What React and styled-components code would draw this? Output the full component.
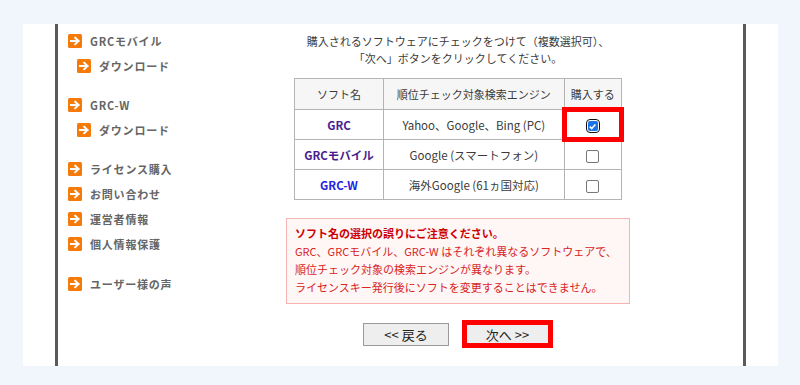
import React from 'react';
import styled, { createGlobalStyle } from 'styled-components';

const GlobalStyle = createGlobalStyle`
  html, body {
    margin: 0;
    padding: 0;
    background: #f1f6fd;
  }
  body {
    font-family: "Noto Sans CJK JP", "Noto Sans", sans-serif;
  }
`;

const Panel = styled.div`
  margin: 24px 22px 0 23px;
  height: 342px;
  background: #ffffff;
  padding-left: 32px;
  box-sizing: border-box;
`;

const Frame = styled.div`
  width: 691px;
  height: 100%;
  box-sizing: border-box;
  border-left: 3px solid #5a5a5a;
  border-right: 3px solid #5a5a5a;
  display: flex;
`;

const Nav = styled.nav`
  width: 228px;
  padding: 4px 0 0 10px;
  box-sizing: border-box;
  display: flex;
  flex-direction: column;
`;

const NavGroup = styled.div`
  margin-bottom: ${(p) => p.gap || 14}px;
`;

const NavItem = styled.div`
  height: 25px;
  display: flex;
  align-items: center;
  gap: 8px;
  padding-left: ${(p) => (p.sub ? 9 : 0)}px;
  font-size: 11px;
  font-weight: 700;
  letter-spacing: 0.8px;
  color: #656565;
`;

const Main = styled.main`
  width: 344px;
  padding-top: 9px;
  display: flex;
  flex-direction: column;
  align-items: center;
`;

const Intro = styled.p`
  margin: 0;
  font-size: 11px;
  line-height: 17px;
  color: #3a3a3a;
  text-align: center;
`;

const Table = styled.table`
  margin-top: 11px;
  width: 328px;
  border-collapse: collapse;
  font-size: 11px;
  color: #3a3a3a;
`;

const Th = styled.th`
  height: 30px;
  padding: 0;
  border: 1px solid #b4b4b4;
  background: #f6f6f6;
  font-weight: 400;
  width: ${(p) => p.w}px;
`;

const Td = styled.td`
  position: relative;
  height: 29px;
  padding: 0;
  border: 1px solid #b4b4b4;
  text-align: center;
  font-size: 11.5px;
`;

const SoftName = styled.span`
  font-weight: 700;
  color: ${(p) => p.color};
`;

const Box = styled.span`
  display: inline-block;
  vertical-align: middle;
  width: 11px;
  height: 11px;
  border-radius: 2px;
  border: 1px solid #777;
  background: #fff;
`;

const CheckedBox = styled.span`
  display: inline-flex;
  align-items: center;
  justify-content: center;
  vertical-align: middle;
  width: 10px;
  height: 10px;
  border-radius: 2px;
  background: #1a73e8;
  outline: 1.5px solid #111;
  outline-offset: 1px;
`;

const Highlight = styled.span`
  position: absolute;
  left: -3px;
  top: -3px;
  right: -3px;
  bottom: -3px;
  border: 5px solid #ff0000;
  pointer-events: none;
`;

const Warning = styled.div`
  margin-top: 18px;
  width: 344px;
  box-sizing: border-box;
  padding: 5px 8px 7px;
  border: 1px solid #f4b4b4;
  background: #fff6f6;
  color: #d82424;
  font-size: 11px;
  line-height: 18px;
`;

const WarnTitle = styled.div`
  font-weight: 700;
  color: #cc0000;
`;

const Buttons = styled.div`
  margin-top: 16px;
  display: flex;
  align-items: center;
  gap: 13px;
`;

const Button = styled.button`
  width: ${(p) => (p.marked ? 91 : 86)}px;
  height: ${(p) => (p.marked ? 28 : 23)}px;
  box-sizing: border-box;
  border: ${(p) => (p.marked ? '5px solid #ff0000' : '1px solid #9a9a9a')};
  background: #eeeeee;
  font-family: "Noto Sans CJK JP", sans-serif;
  font-size: 13px;
  color: #222;
  padding: 0;
`;

const Arrow = () => (
  <svg width="14" height="14" viewBox="0 0 14 14">
    <rect width="14" height="14" rx="1.5" fill="#f47a0a" />
    <path d="M3 7H10.5M7.2 3.8L10.5 7L7.2 10.2" stroke="#fff" strokeWidth="2" fill="none" strokeLinecap="square" />
  </svg>
);

const Check = () => (
  <svg width="9" height="9" viewBox="0 0 10 10">
    <path d="M2 5.2L4.1 7.3L8.2 2.8" stroke="#fff" strokeWidth="1.8" fill="none" />
  </svg>
);

const rows = [
  { name: 'GRC', color: '#4a1d8e', engine: 'Yahoo、Google、Bing (PC)', checked: true },
  { name: 'GRCモバイル', color: '#4a1d8e', engine: 'Google (スマートフォン)' },
  { name: 'GRC-W', color: '#2424e0', engine: '海外Google (61ヵ国対応)' },
];

export default function App() {
  return (
    <>
      <GlobalStyle />
      <Panel>
        <Frame>
          <Nav>
            <NavGroup>
              <NavItem><Arrow />GRCモバイル</NavItem>
              <NavItem sub><Arrow />ダウンロード</NavItem>
            </NavGroup>
            <NavGroup>
              <NavItem><Arrow />GRC-W</NavItem>
              <NavItem sub><Arrow />ダウンロード</NavItem>
            </NavGroup>
            <NavGroup gap={15}>
              <NavItem><Arrow />ライセンス購入</NavItem>
              <NavItem><Arrow />お問い合わせ</NavItem>
              <NavItem><Arrow />運営者情報</NavItem>
              <NavItem><Arrow />個人情報保護</NavItem>
            </NavGroup>
            <NavGroup>
              <NavItem><Arrow />ユーザー様の声</NavItem>
            </NavGroup>
          </Nav>
          <Main>
            <Intro>
              購入されるソフトウェアにチェックをつけて（複数選択可）、
              <br />
              「次へ」ボタンをクリックしてください。
            </Intro>
            <Table>
              <thead>
                <tr>
                  <Th w={89}>ソフト名</Th>
                  <Th w={182}>順位チェック対象検索エンジン</Th>
                  <Th w={57}>購入する</Th>
                </tr>
              </thead>
              <tbody>
                {rows.map((r) => (
                  <tr key={r.name}>
                    <Td><SoftName color={r.color}>{r.name}</SoftName></Td>
                    <Td>{r.engine}</Td>
                    <Td>
                      {r.checked ? (
                        <>
                          <CheckedBox><Check /></CheckedBox>
                          <Highlight />
                        </>
                      ) : (
                        <Box />
                      )}
                    </Td>
                  </tr>
                ))}
              </tbody>
            </Table>
            <Warning>
              <WarnTitle>ソフト名の選択の誤りにご注意ください。</WarnTitle>
              <div>GRC、GRCモバイル、GRC-W はそれぞれ異なるソフトウェアで、</div>
              <div>順位チェック対象の検索エンジンが異なります。</div>
              <div>ライセンスキー発行後にソフトを変更することはできません。</div>
            </Warning>
            <Buttons>
              <Button>&lt;&lt; 戻る</Button>
              <Button marked>次へ &gt;&gt;</Button>
            </Buttons>
          </Main>
        </Frame>
      </Panel>
    </>
  );
}
